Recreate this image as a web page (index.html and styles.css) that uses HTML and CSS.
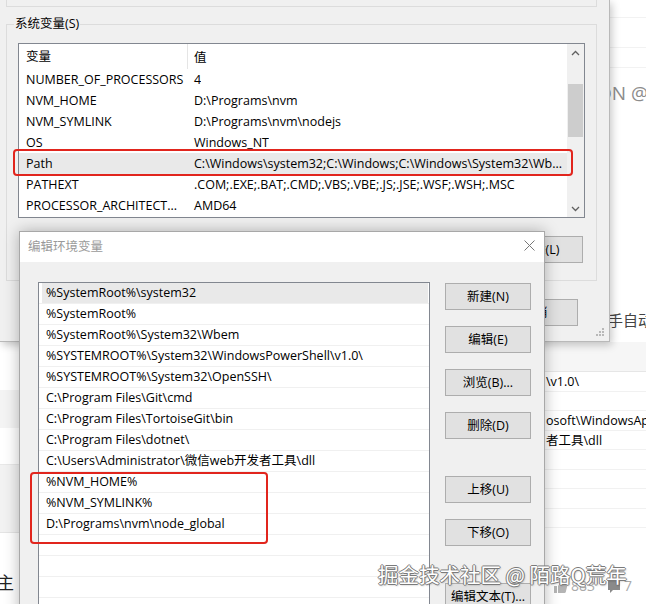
FILE: index.html
```html
<!DOCTYPE html>
<html lang="zh-CN">
<head>
<meta charset="utf-8">
<title>编辑环境变量</title>
<link rel="stylesheet" href="styles.css">
</head>
<body>
<div class="screen">

  <!-- web page behind the windows -->
  <div class="web">
    <div class="web-left">
      <div class="wl-a"></div>
      <div class="wl-b"></div>
      <div class="wl-c"></div>
      <div class="wl-d"></div>
      <div class="wl-e"><span class="wl-char">主</span></div>
    </div>
    <div class="web-mid"></div>
    <div class="web-right">
      <div class="wr-line h18"></div>
      <div class="wr-line h30"></div>
      <div class="wr-line h20"></div>
      <div class="wr-title">ON @</div>
      <div class="wr-gap"></div>
      <div class="wr-text"><span>手自动</span></div>
      <div class="wr-bar"></div>
      <div class="code">
        <div class="code-line">\v1.0\</div>
        <div class="code-line"></div>
        <div class="code-line">osoft\WindowsApps</div>
        <div class="code-line">者工具\dll</div>
        <div class="code-line"></div>
        <div class="code-line"></div>
        <div class="code-line"></div>
        <div class="code-line"></div>
      </div>
      <div class="stats">
        <svg class="ic-like" width="15" height="14" viewBox="0 0 15 14"><path d="M1 6h3v7H1zM5 6l3-5c1.2 0 2 .8 1.8 2L9.3 5H13c.8 0 1.3.7 1.1 1.5l-1.3 5.6c-.2.6-.7.9-1.3.9H5z" fill="#b4b4b4"/></svg>
        <span class="st-num">883</span>
        <svg class="ic-cmt" width="14" height="14" viewBox="0 0 14 14"><path d="M1 1h12v9H6l-3 3v-3H1z" fill="#8a8a8a"/></svg>
        <span class="st-num">7</span>
      </div>
    </div>
  </div>

  <!-- environment variables window (background) -->
  <div class="envwin">
    <div class="grp-prev"></div>
    <div class="grp-sys">
      <span class="legend">系统变量(S)</span>
      <div class="listview">
        <div class="lv-main">
          <div class="lv-head">
            <div class="c1">变量</div>
            <div class="c2">值</div>
          </div>
          <div class="lv-row"><div class="c1">NUMBER_OF_PROCESSORS</div><div class="c2">4</div></div>
          <div class="lv-row"><div class="c1">NVM_HOME</div><div class="c2">D:\Programs\nvm</div></div>
          <div class="lv-row"><div class="c1">NVM_SYMLINK</div><div class="c2">D:\Programs\nvm\nodejs</div></div>
          <div class="lv-row"><div class="c1">OS</div><div class="c2">Windows_NT</div></div>
          <div class="lv-row sel"><div class="c1">Path</div><div class="c2">C:\Windows\system32;C:\Windows;C:\Windows\System32\Wb...</div></div>
          <div class="lv-row"><div class="c1">PATHEXT</div><div class="c2">.COM;.EXE;.BAT;.CMD;.VBS;.VBE;.JS;.JSE;.WSF;.WSH;.MSC</div></div>
          <div class="lv-row"><div class="c1">PROCESSOR_ARCHITECT...</div><div class="c2">AMD64</div></div>
        </div>
        <div class="vscroll">
          <div class="sb-arrow"><svg width="9" height="6" viewBox="0 0 9 6"><path d="M1 5l3.5-3.5L8 5" fill="none" stroke="#606060" stroke-width="1.3"/></svg></div>
          <div class="sb-track"><div class="sb-thumb"></div></div>
          <div class="sb-arrow"><svg width="9" height="6" viewBox="0 0 9 6"><path d="M1 1l3.5 3.5L8 1" fill="none" stroke="#606060" stroke-width="1.3"/></svg></div>
        </div>
      </div>
      <div class="btnrow">
        <button class="wbtn">新建(W)...</button>
        <button class="wbtn">编辑(I)...</button>
        <button class="wbtn">删除(L)</button>
      </div>
    </div>
    <div class="dlg-btns">
      <button class="wbtn">确定</button>
      <button class="wbtn">取消</button>
    </div>
    <svg class="grip" width="9" height="9" viewBox="0 0 9 9"><g fill="#b8b8b8"><rect x="6" y="0" width="2" height="2"/><rect x="3" y="3" width="2" height="2"/><rect x="6" y="3" width="2" height="2"/><rect x="0" y="6" width="2" height="2"/><rect x="3" y="6" width="2" height="2"/><rect x="6" y="6" width="2" height="2"/></g></svg>
  </div>

  <!-- edit environment variable dialog (foreground) -->
  <div class="editdlg">
    <div class="titlebar">
      <span class="title">编辑环境变量</span>
      <span class="close"><svg width="11" height="11" viewBox="0 0 11 11"><path d="M0.5 0.5l10 10M10.5 0.5l-10 10" stroke="#777" stroke-width="1"/></svg></span>
    </div>
    <div class="dlg-body">
      <div class="pathlist">
        <div class="pl-row sel">%SystemRoot%\system32</div>
        <div class="pl-row">%SystemRoot%</div>
        <div class="pl-row">%SystemRoot%\System32\Wbem</div>
        <div class="pl-row">%SYSTEMROOT%\System32\WindowsPowerShell\v1.0\</div>
        <div class="pl-row">%SYSTEMROOT%\System32\OpenSSH\</div>
        <div class="pl-row">C:\Program Files\Git\cmd</div>
        <div class="pl-row">C:\Program Files\TortoiseGit\bin</div>
        <div class="pl-row">C:\Program Files\dotnet\</div>
        <div class="pl-row">C:\Users\Administrator\微信web开发者工具\dll</div>
        <div class="pl-row">%NVM_HOME%</div>
        <div class="pl-row">%NVM_SYMLINK%</div>
        <div class="pl-row">D:\Programs\nvm\node_global</div>
        <div class="pl-row"></div>
        <div class="pl-row"></div>
        <div class="pl-row"></div>
        <div class="pl-row"></div>
      </div>
      <div class="side-btns">
        <button class="wbtn">新建(N)</button>
        <button class="wbtn">编辑(E)</button>
        <button class="wbtn">浏览(B)...</button>
        <button class="wbtn">删除(D)</button>
        <button class="wbtn grp">上移(U)</button>
        <button class="wbtn">下移(O)</button>
        <button class="wbtn grp">编辑文本(T)...</button>
      </div>
    </div>
  </div>

  <!-- annotations -->
  <div class="mark mark-path"></div>
  <div class="mark mark-nvm"></div>
  <div class="watermark">掘金技术社区 @ 陌路Q荒年</div>
</div>
</body>
</html>
```

FILE: styles.css
```css
* { box-sizing: border-box; }
html, body { margin: 0; padding: 0; }
body {
  width: 646px;
  height: 604px;
  overflow: hidden;
  background: #fff;
  font-family: "Open Sans", "Noto Sans CJK SC", sans-serif;
  font-size: 12.5px;
  color: #000;
}
.screen { position: relative; width: 646px; height: 604px; overflow: hidden; }

/* ---------- web page behind ---------- */
.web { display: flex; width: 646px; height: 604px; }
.web-left { width: 19px; display: flex; flex-direction: column; }
.web-mid { flex: 1; }
.web-right { width: 101px; display: flex; flex-direction: column; }

.wl-a { height: 390px; }
.wl-b { height: 38px; background: #f4f4f4; }
.wl-c { height: 37px; border-bottom: 1px solid #e8e8e8; }
.wl-d { height: 68px; background: #f2f2f2; border-bottom: 1px solid #e4e4e4; }
.wl-e { flex: 1; padding-top: 36px; }
.wl-char { font-size: 17px; margin-left: -3px; color: #222; }

.wr-line { border-bottom: 1px solid #f2f2f2; }
.h18 { height: 18px; }
.h30 { height: 30px; }
.h20 { height: 20px; }
.wr-title { height: 50px; padding: 12px 0 0 52px; font-size: 19px; color: #8c8c8c; line-height: 26px; white-space: nowrap; }
.wr-gap { height: 186px; }
.wr-text { height: 38px; padding-left: 63px; font-size: 15px; line-height: 20px; white-space: nowrap; overflow: hidden; color: #444; }
.wr-text span { display: block; margin-top: 6px; }
.wr-bar { height: 30px; background: #f6f6f6; border-bottom: 1px solid #e6e6e6; }
.code { background: #fff; }
.code-line { height: 19.5px; line-height: 19px; border-bottom: 1px solid #f1f1f1; white-space: nowrap; overflow: hidden; padding-left: 1px; font-size: 12.5px; color: #000; }
.stats { flex: 1; display: flex; align-items: flex-end; padding: 0 0 10px 8px; gap: 3px; }
.st-num { color: #aaa; font-size: 14px; line-height: 16px; }
.ic-cmt { margin-left: 9px; }

/* ---------- env var window ---------- */
.envwin {
  position: absolute;
  left: 0; top: 0;
  width: 610px; height: 342px;
  background: #f0f0f0;
  border-right: 1px solid #b9b9b9;
  border-bottom: 1px solid #b9b9b9;
  box-shadow: 2px 3px 8px rgba(0,0,0,.22);
}
.grp-prev {
  margin-left: 6px;
  width: 591px;
  height: 7px;
  border: 1px solid #dcdcdc;
  border-top: none;
}
.grp-sys {
  position: relative;
  margin: 17px 0 0 6px;
  width: 591px;
  height: 257px;
  border: 1px solid #dcdcdc;
  padding: 18px 11px 0 11px;
}
.legend {
  position: absolute;
  left: 7px; top: -10px;
  padding: 0 1px;
  background: #f0f0f0;
  line-height: 18px;
  font-size: 12.5px;
}
.listview {
  display: flex;
  width: 567px;
  height: 175px;
  border: 1px solid #828790;
  background: #fff;
}
.lv-main { flex: 1; min-width: 0; }
.lv-head { display: flex; height: 25px; align-items: center; }
.lv-head .c1 { border-right: 1px solid #e5e5e5; height: 25px; line-height: 25px; }
.lv-row { display: flex; height: 21px; align-items: center; white-space: nowrap; }
.lv-row.sel { background: #e9e9e9; }
.c1 { width: 169px; padding-left: 7px; flex: none; overflow: hidden; }
.c2 { padding-left: 6px; overflow: hidden; }

.vscroll { width: 17px; background: #f0f0f0; display: flex; flex-direction: column; }
.sb-arrow { height: 17px; display: flex; align-items: center; justify-content: center; }
.sb-track { flex: 1; padding: 23px 1px 0 1px; }
.sb-thumb { height: 53px; background: #cdcdcd; }

.wbtn {
  width: 86px;
  height: 27px;
  padding: 0;
  background: #e1e1e1;
  border: 1px solid #adadad;
  border-radius: 0;
  font: inherit;
  font-size: 12.5px;
  color: #000;
  line-height: 25px;
  text-align: center;
}
.btnrow { display: flex; justify-content: flex-end; gap: 9px; margin-top: 18px; padding-right: 2px; }
.dlg-btns { display: flex; justify-content: flex-end; gap: 9px; margin-top: 18px; padding-right: 31px; }
.grip { position: absolute; right: 4px; bottom: 4px; }

/* ---------- edit dialog ---------- */
.editdlg {
  position: absolute;
  left: 19px; top: 231px;
  width: 526px; height: 390px;
  background: #f0f0f0;
  border: 1px solid #a8a8a8;
  box-shadow: 0 0 14px rgba(0,0,0,.28);
  display: flex;
  flex-direction: column;
}
.titlebar {
  height: 30px;
  background: #fff;
  display: flex;
  align-items: center;
  justify-content: space-between;
  padding-left: 8px;
}
.title { color: #9a9a9a; font-size: 12.5px; margin-top: -3px; }
.close { width: 30px; height: 30px; display: flex; align-items: center; justify-content: center; margin-top: -4px; }
.dlg-body { flex: 1; display: flex; padding: 20px 13px 0 18px; gap: 15px; }
.pathlist {
  width: 392px;
  border: 1px solid #828790;
  background: #fff;
  align-self: stretch;
}
.pl-row {
  height: 21px;
  line-height: 20px;
  padding-left: 7px;
  border-bottom: 1px solid #f0f0f0;
  white-space: nowrap;
  overflow: hidden;
}
.pl-row.sel { background: linear-gradient(to right, #fff 3px, #e9e9e9 3px, #e9e9e9 389px, #fff 389px); }
.side-btns { width: 86px; display: flex; flex-direction: column; gap: 16px; padding-top: 1px; }
.side-btns .wbtn.grp { margin-top: 21px; }

/* ---------- annotations ---------- */
.mark {
  position: absolute;
  border: 2.5px solid #e1251d;
  border-radius: 4px;
}
.mark-path { left: 13px; top: 149px; width: 560px; height: 27px; }
.mark-nvm { left: 30px; top: 472px; width: 238px; height: 72px; }
.watermark {
  position: absolute;
  left: 378px; top: 560px;
  font-family: "Noto Sans CJK SC", sans-serif;
  font-size: 20.5px;
  line-height: 28px;
  color: #fff;
  white-space: nowrap;
  text-shadow: 1px 0 0 #7a7a7a, -1px 0 0 #7a7a7a, 0 1px 0 #7a7a7a, 0 -1px 0 #7a7a7a, 1px 1px 2px rgba(0,0,0,.35);
}
```
